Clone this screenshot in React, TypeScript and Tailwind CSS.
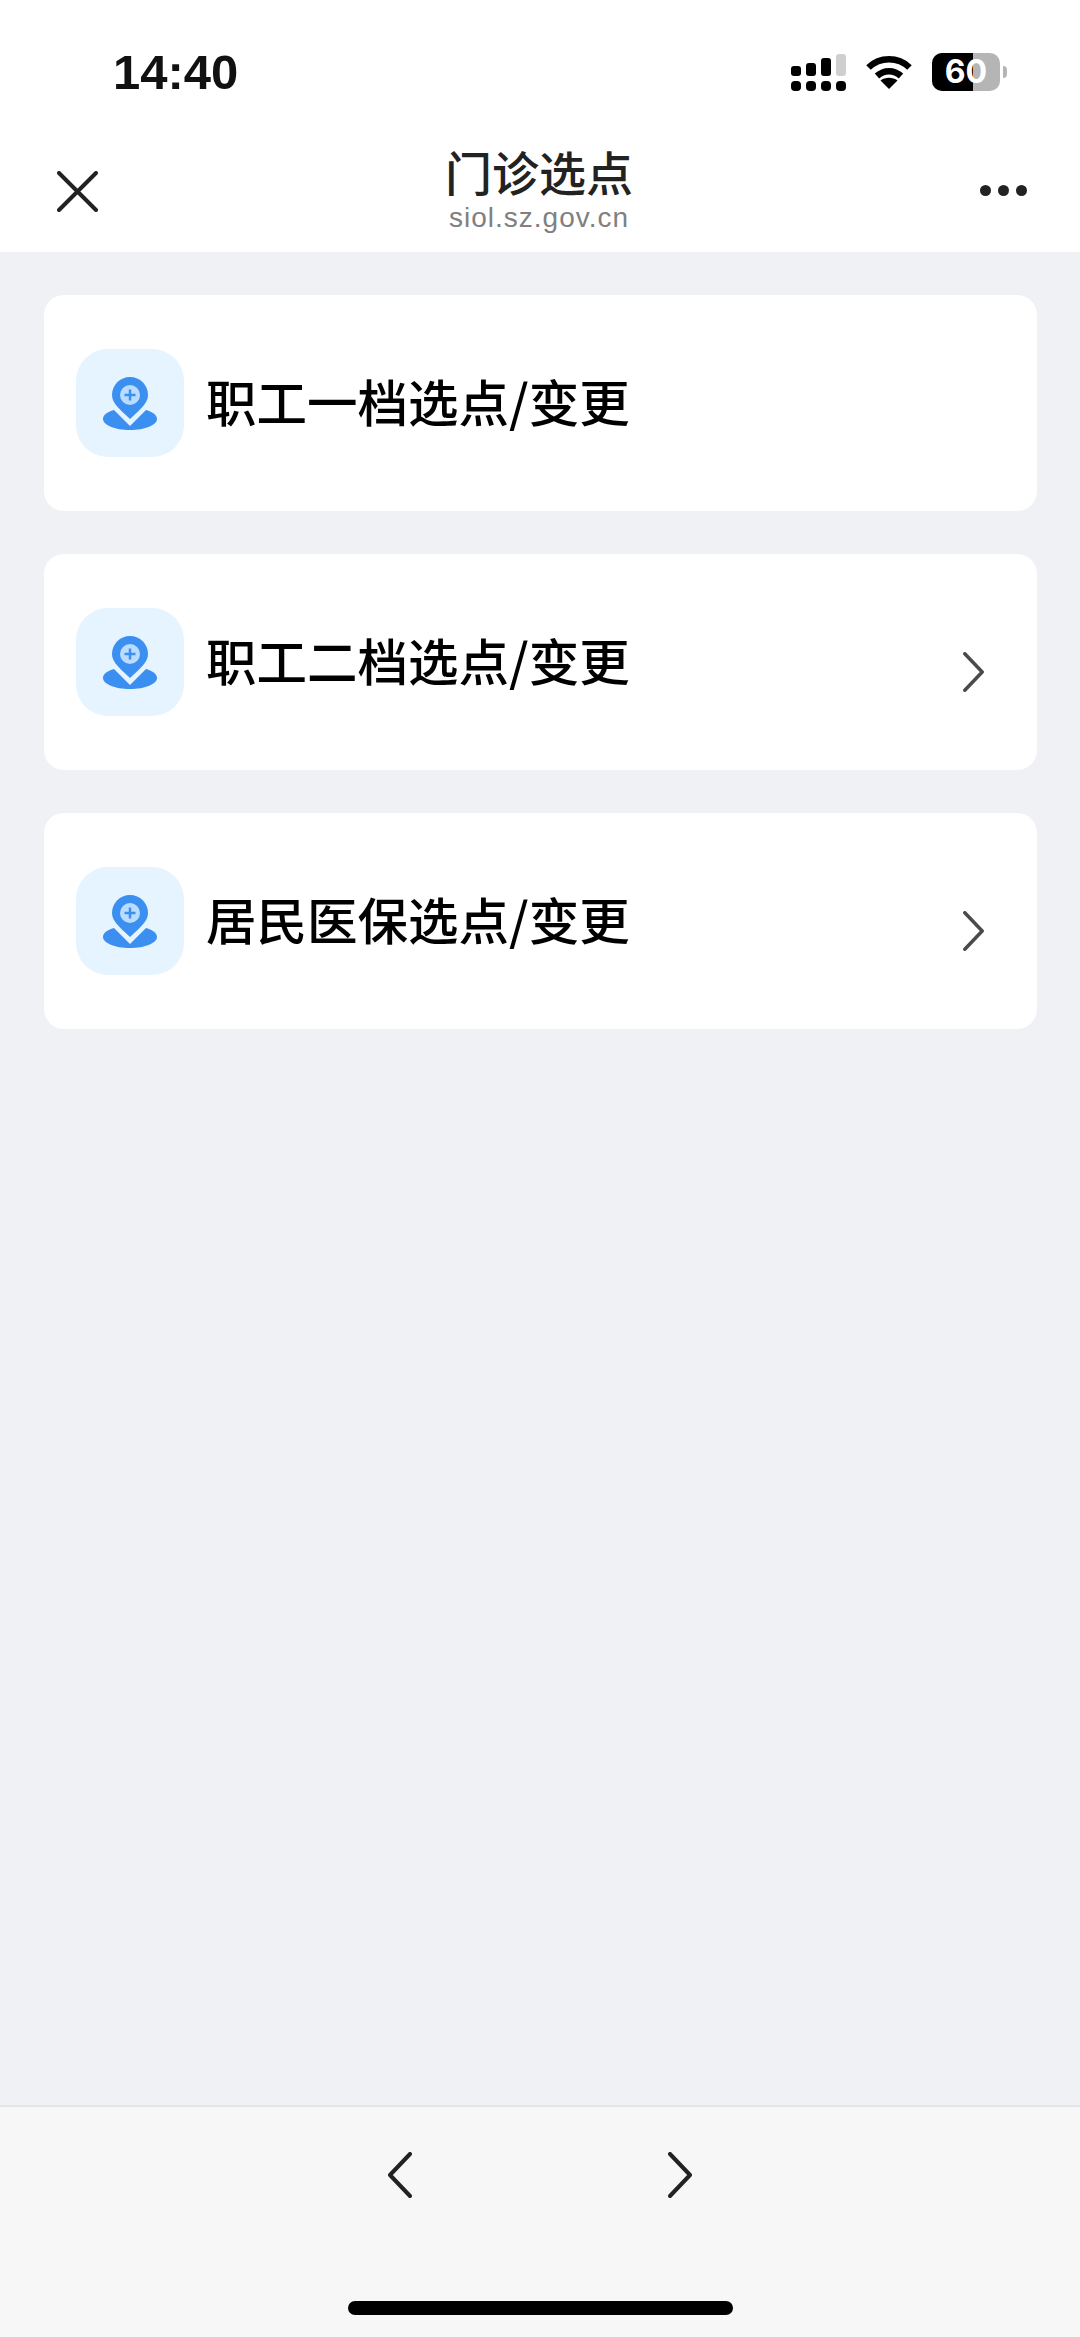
const cjk = "font-['Noto_Sans_CJK_SC','Noto_Sans',sans-serif]";

function SignalIcon() {
  return (
    <svg width="55" height="37" viewBox="0 0 55 37" fill="#000">
      <rect x="0" y="12" width="10" height="10" rx="3" />
      <rect x="15" y="9" width="10" height="13" rx="3" />
      <rect x="30" y="4" width="10" height="18" rx="3" />
      <rect x="45" y="0" width="10" height="22" rx="3" fill="#cfcfcf" />
      <rect x="0" y="27" width="10" height="10" rx="4" />
      <rect x="15" y="27" width="10" height="10" rx="4" />
      <rect x="30" y="27" width="10" height="10" rx="4" />
      <rect x="45" y="27" width="10" height="10" rx="4" />
    </svg>
  );
}

function WifiIcon() {
  return (
    <svg width="46" height="34" viewBox="0 0 46 34" fill="none" stroke="#000" strokeWidth="6.5">
      <path d="M2.5 12.5C14 1.5 32 1.5 43.5 12.5" />
      <path d="M11 21C18 14.5 28 14.5 35 21" />
      <path d="M23 34L14.5 25.5C19 21.8 27 21.8 31.5 25.5Z" fill="#000" stroke="none" />
    </svg>
  );
}

function Battery() {
  return (
    <div className="flex items-center gap-[3px]">
      <div className="relative flex h-[38px] w-[68px] items-center justify-center rounded-[10px] bg-[#b5b5b5]">
        <div className="absolute inset-y-0 left-0 w-[41px] rounded-l-[10px] bg-black" />
        <span className="relative font-['Inter',sans-serif] text-[32px] leading-[38px] font-bold text-white">60</span>
      </div>
      <div className="h-[12px] w-[4px] rounded-r-full bg-[#b5b5b5]" />
    </div>
  );
}

function PinIcon() {
  return (
    <svg width="56" height="56" viewBox="0 0 56 56">
      <path d="M12 35C5 37 1 40 1 44C1 50 13 55 28 55C43 55 55 50 55 44C55 40 51 37 44 35L28 51Z" fill="#3a8ff0" />
      <path d="M28 2C18 2 10 10 10 20C10 27 15 32 28 44C41 32 46 27 46 20C46 10 38 2 28 2Z" fill="#3a8ff0" />
      <circle cx="28" cy="20" r="10" fill="#b9dcff" />
      <path d="M28 14.500V25.500M22.500 20H33.500" stroke="#3a8ff0" strokeWidth="2.500" />
    </svg>
  );
}

function Chevron({ left = false, small = false, color = "#222" }: { left?: boolean; small?: boolean; color?: string }) {
  return (
    <svg
      width={small ? 21 : 24}
      height={small ? 40 : 46}
      viewBox="0 0 24 46"
      fill="none"
      stroke={color}
      strokeWidth="4"
      strokeLinecap="round"
      strokeLinejoin="round"
    >
      <path d={left ? "M22 2L2 23L22 44" : "M2 2L22 23L2 44"} />
    </svg>
  );
}

const rows = [
  { label: "职工一档选点/变更", arrow: false },
  { label: "职工二档选点/变更", arrow: true },
  { label: "居民医保选点/变更", arrow: true },
];

export default function App() {
  return (
    <div className="flex h-[2337px] w-[1080px] flex-col bg-[#eff1f5]">
      <header className="h-[252px] bg-white">
        <div className="flex items-center justify-between pt-[52px] pr-[73px] pl-[113px]">
          <span className="font-['Liberation_Sans',sans-serif] text-[49px] leading-[40px] font-bold text-[#111]">14:40</span>
          <div className="flex items-center gap-[20px]">
            <SignalIcon />
            <WifiIcon />
            <Battery />
          </div>
        </div>
        <div className="flex items-start pt-[52px] pr-[53px] pl-[57px]">
          <svg width="41" height="41" viewBox="0 0 41 41" className="mt-[27px]" stroke="#222" strokeWidth="4" strokeLinecap="round">
            <path d="M2 2L39 39M39 2L2 39" />
          </svg>
          <div className="flex-1 text-center">
            <div className={`${cjk} text-[47px] leading-[54px] font-medium text-[#222]`}>门诊选点</div>
            <div className="mt-[5px] font-['Liberation_Sans',sans-serif] text-[28px] leading-[30px] tracking-[1px] text-[#808080]">siol.sz.gov.cn</div>
          </div>
          <div className="mt-[41px] flex gap-[7px]">
            {[0, 1, 2].map((i) => (
              <span key={i} className="h-[11px] w-[11px] rounded-full bg-[#222]" />
            ))}
          </div>
        </div>
      </header>

      <main className="flex flex-1 flex-col gap-[43px] pt-[43px] pr-[43px] pl-[44px]">
        {rows.map((row) => (
          <div key={row.label} className="flex h-[216px] items-center rounded-[20px] bg-white pr-[53px] pl-[32px]">
            <div className="flex h-[108px] w-[108px] items-center justify-center rounded-[32px] bg-[#e6f4ff]">
              <PinIcon />
            </div>
            <span className={`${cjk} mb-[6px] ml-[22px] flex-1 text-[50.5px] leading-none font-medium text-black`}>{row.label}</span>
            {row.arrow && (
              <div className="mt-[20px]">
                <Chevron small color="#4a4a4a" />
              </div>
            )}
          </div>
        ))}
      </main>

      <footer className="flex h-[232px] flex-col items-center border-t-2 border-[#e3e4e8] bg-[#f7f7f7]">
        <div className="flex gap-[256px] pt-[45px]">
          <Chevron left />
          <Chevron />
        </div>
        <div className="mt-[103px] h-[14px] w-[385px] rounded-full bg-black" />
      </footer>
    </div>
  );
}
